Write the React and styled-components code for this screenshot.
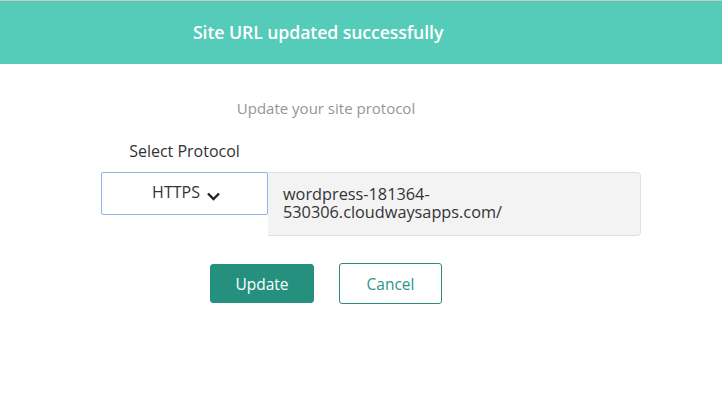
import React from 'react';
import styled, { createGlobalStyle } from 'styled-components';

const Global = createGlobalStyle`
	body {
		margin: 0;
		background: #fff;
		font-family: "Open Sans", "Liberation Sans", sans-serif;
	}
`;

const Page = styled.div`
	width: 722px;
	height: 405px;
	border-top: 1px solid #c9c9c9;
	box-sizing: border-box;
`;

const Header = styled.div`
	height: 63px;
	background: #55cbb9;
	display: flex;
	align-items: center;
	padding-left: 193px;
	padding-bottom: 2px;
	box-sizing: border-box;
`;

const Title = styled.h1`
	margin: 0;
	color: #fff;
	font-size: 17.7px;
	font-weight: 600;
	letter-spacing: -0.1px;
`;

const Body = styled.div`
	width: 652px;
	display: flex;
	flex-direction: column;
	align-items: center;
	padding-top: 34px;
`;

const Subtitle = styled.div`
	color: #959595;
	font-size: 15px;
	line-height: 20px;
`;

const Form = styled.div`
	align-self: flex-start;
	margin-left: 101px;
	margin-top: 23px;
	display: grid;
	grid-template-columns: 167px 373px;
	grid-template-rows: auto auto;
	row-gap: 11px;
`;

const Label = styled.div`
	grid-column: 1;
	text-align: center;
	color: #333;
	font-size: 16px;
	line-height: 20px;
`;

const Select = styled.div`
	grid-column: 1;
	grid-row: 2;
	height: 43px;
	border: 1px solid #8fb3ec;
	border-radius: 2px;
	box-sizing: border-box;
	display: flex;
	align-items: center;
	justify-content: center;
	gap: 6px;
	color: #333;
	font-size: 16px;
	padding-bottom: 3px;
	padding-left: 4px;
	svg { margin-top: 8px; }
`;

const UrlBox = styled.div`
	grid-column: 2;
	grid-row: 2;
	height: 64px;
	background: #f3f3f3;
	border: 1px solid #e0e0e0;
	border-left: none;
	border-radius: 0 4px 4px 0;
	box-sizing: border-box;
	padding: 12px 15px 0;
	color: #333;
	font-size: 16.3px;
	line-height: 18px;
`;

const Actions = styled.div`
	display: flex;
	gap: 25px;
	margin-top: 27px;
`;

const Button = styled.button`
	width: ${p => (p.$outline ? '103px' : '104px')};
	height: ${p => (p.$outline ? '41px' : '39px')};
	margin-top: ${p => (p.$outline ? '0' : '1px')};
	border-radius: 3px;
	font-family: inherit;
	font-size: 15.5px;
	cursor: pointer;
	background: ${p => (p.$outline ? '#fff' : '#26907f')};
	color: ${p => (p.$outline ? '#2f9485' : '#fff')};
	border: 1px solid ${p => (p.$outline ? '#2f8a7d' : '#26907f')};
`;

const Chevron = () => (
	<svg width="15" height="10" viewBox="0 0 15 10">
		<path d="M2 2.5 L7.5 8 L13 2.5" fill="none" stroke="#222" strokeWidth="2.4" />
	</svg>
);

export default function App() {
	return (
		<Page>
			<Global />
			<Header>
				<Title>Site URL updated successfully</Title>
			</Header>
			<Body>
				<Subtitle>Update your site protocol</Subtitle>
				<Form>
					<Label>Select Protocol</Label>
					<Select>
						HTTPS <Chevron />
					</Select>
					<UrlBox>
						wordpress-181364-
						<br />
						530306.cloudwaysapps.com/
					</UrlBox>
				</Form>
				<Actions>
					<Button>Update</Button>
					<Button $outline>Cancel</Button>
				</Actions>
			</Body>
		</Page>
	);
}
